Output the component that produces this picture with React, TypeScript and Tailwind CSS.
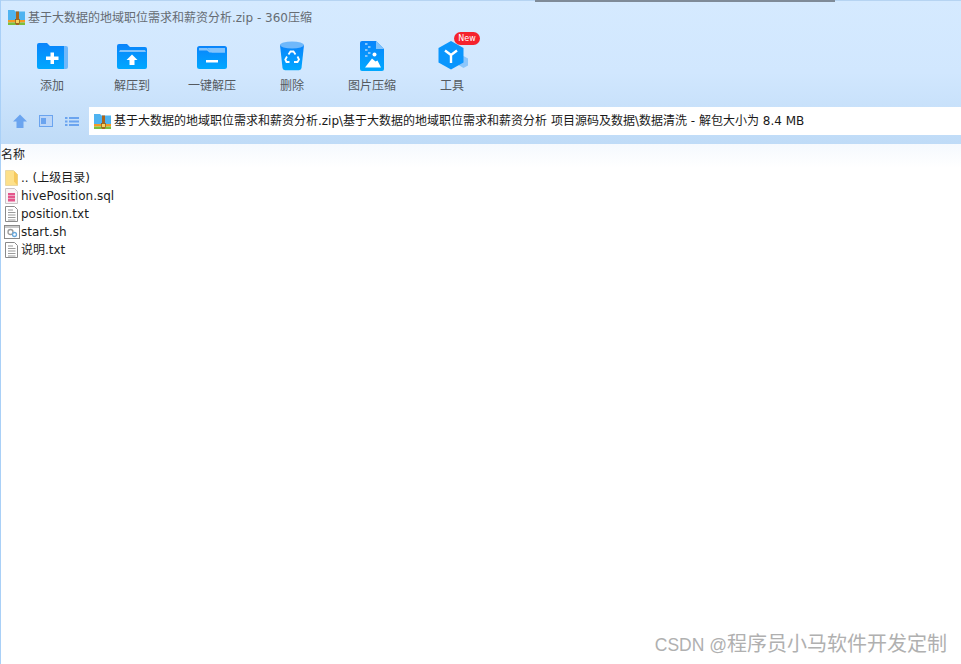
const FONT = "font-['DejaVu_Sans','Noto_Sans_CJK_SC',sans-serif]";

function ZipIcon() {
  return (
    <svg viewBox="0 0 17 15" width="17" height="15">
      <path d="M0 0h6l1.500 1.500H17V11H0z" fill="#4fb3f0" />
      <rect x="0" y="10" width="17" height="2.500" fill="#f59a23" />
      <rect x="0" y="12.500" width="17" height="2.500" fill="#7cbf3c" />
      <rect x="8" y="1.500" width="3" height="13.500" fill="#a8651f" />
      <rect x="7.500" y="9.500" width="4" height="4" fill="#f6d45f" stroke="#8a5317" strokeWidth="0.7" />
    </svg>
  );
}

function BlueGrad({ id }: { id: string }) {
  return (
    <defs>
      <linearGradient id={id} x1="0" y1="0" x2="0" y2="1">
        <stop offset="0" stopColor="#0a84fb" />
        <stop offset="1" stopColor="#00a8ff" />
      </linearGradient>
    </defs>
  );
}

const tools: { label: string; icon: React.ReactNode }[] = [
  {
    label: "添加",
    icon: (
      <svg viewBox="0 0 32 30" width="32" height="30">
        <BlueGrad id="g1" />
        <path d="M26 5h4a2 2 0 0 1 2 2v19a2 2 0 0 1-2 2h-4z" fill="#6fb8fb" />
        <path d="M1 4a2 2 0 0 1 2-2h8l3 3h14v23H3a2 2 0 0 1-2-2z" fill="url(#g1)" />
        <path d="M14.500 11.500h3.500v4h4.500v3.500h-4.500v4h-3.500v-4h-4.500v-3.500h4.500z" fill="#fff" />
      </svg>
    ),
  },
  {
    label: "解压到",
    icon: (
      <svg viewBox="0 0 32 30" width="32" height="30">
        <BlueGrad id="g2" />
        <path d="M1 5a2 2 0 0 1 2-2h8l3 3h15a2 2 0 0 1 2 2v18a2 2 0 0 1-2 2H3a2 2 0 0 1-2-2z" fill="url(#g2)" />
        <path d="M3 11l1-2h25l1 2z" fill="#82c3fc" />
        <path d="M16 13.500l5.500 5.500h-3v5h-5v-5h-3z" fill="#fff" />
      </svg>
    ),
  },
  {
    label: "一键解压",
    icon: (
      <svg viewBox="0 0 32 30" width="32" height="30">
        <BlueGrad id="g3" />
        <rect x="1" y="5" width="30" height="23" rx="2.500" fill="url(#g3)" />
        <path d="M3 7h8l3 2.500v2h-.5l-2.500-2H3zM14 7h15v4.500H14z" fill="#82c3fc" />
        <path d="M11 7l5 4.500h13V7z" fill="#82c3fc" />
        <rect x="10" y="19" width="12" height="2.500" fill="#fff" />
      </svg>
    ),
  },
  {
    label: "删除",
    icon: (
      <svg viewBox="0 0 26 30" width="26" height="30">
        <BlueGrad id="g4" />
        <path d="M1 4l2.500 23q.3 2 2.500 2.300h14q2.200-.3 2.500-2.300L25 4z" fill="url(#g4)" />
        <ellipse cx="13" cy="4" rx="12" ry="3.500" fill="#6fb8fb" />
        <g fill="none" stroke="#fff" strokeWidth="1.800">
          <path d="M9.500 13.500l2-3h3l2 3" />
          <path d="M18.500 15.500l1.500 3-1.500 2.500h-3.500" />
          <path d="M10.500 21H7.500l-1.200-2.500 1.700-3" />
        </g>
      </svg>
    ),
  },
  {
    label: "图片压缩",
    icon: (
      <svg viewBox="0 0 24 30" width="24" height="30">
        <BlueGrad id="g5" />
        <path d="M2 0h14l8 8v20a2 2 0 0 1-2 2H2a2 2 0 0 1-2-2V2a2 2 0 0 1 2-2z" fill="url(#g5)" />
        <path d="M16 0l8 8h-8z" fill="#82c3fc" />
        <path d="M5 26.500l7-9 3.500 3 2-1L21 26.500z" fill="#fff" />
        <circle cx="14.500" cy="13.500" r="2" fill="#fff" />
        <g fill="#82c3fc">
          <rect x="5" y="2" width="2.500" height="2" />
          <rect x="8" y="5" width="2.500" height="2" />
          <rect x="5" y="8" width="2.500" height="2" />
          <rect x="8" y="11" width="2.500" height="2" />
          <rect x="5" y="14" width="2.500" height="2" />
        </g>
      </svg>
    ),
  },
  {
    label: "工具",
    icon: (
      <svg viewBox="0 0 32 30" width="32" height="30">
        <path d="M27.500 15l4.500 2.500v7l-4.500 2.500-5-3v-6z" fill="#8cc6fb" />
        <path d="M15 0l12.500 7v14.500L15 28.500 2.500 21.500V7z" fill="#0a96fd" />
        <path d="M9 9.500l6 4.500 6-4.500M15 14v8" fill="none" stroke="#fff" strokeWidth="2.400" />
      </svg>
    ),
  },
];

function Doc() {
  return (
    <svg viewBox="0 0 13 16" width="13" height="16">
      <path d="M.5.5h9l3 3v12H.5z" fill="#fff" stroke="#8a8a8a" />
      <path d="M3 4h5M3 6.500h7.500M3 9h7.500M3 11.500h7.500M3 14h7.500" stroke="#9a9a9a" />
    </svg>
  );
}

const files: { name: string; icon: React.ReactNode }[] = [
  {
    name: ".. (上级目录)",
    icon: (
      <svg viewBox="0 0 13 16" width="13" height="16">
        <path d="M.5.500h8l4 4v11H.5z" fill="#fde08a" stroke="#e8d7a5" />
        <path d="M9 1v10.500l3.500 4v-11z" fill="#f6c95e" />
      </svg>
    ),
  },
  {
    name: "hivePosition.sql",
    icon: (
      <svg viewBox="0 0 13 16" width="13" height="16">
        <path d="M.5.500h9l3 3v12H.5z" fill="#f7f3f5" stroke="#c9c4c6" />
        <path d="M3 5h7v2.500H3zM3 8h7v2.500H3zM3 11h7v2.500H3z" fill="#e4568c" />
      </svg>
    ),
  },
  { name: "position.txt", icon: <Doc /> },
  {
    name: "start.sh",
    icon: (
      <svg viewBox="0 0 16 14" width="16" height="14">
        <rect x=".5" y=".5" width="15" height="13" fill="#fff" stroke="#8a8a8a" />
        <rect x="1" y="1" width="14" height="2" fill="#c9c9c9" />
        <circle cx="6.500" cy="7" r="2.500" fill="none" stroke="#9a9a9a" strokeWidth="1.300" />
        <circle cx="10.500" cy="9.500" r="2" fill="none" stroke="#6aa9dc" strokeWidth="1.300" />
      </svg>
    ),
  },
  { name: "说明.txt", icon: <Doc /> },
];

export default function App() {
  return (
    <div className={`relative flex h-[664px] w-[961px] flex-col overflow-hidden border-l border-[#a9d0f7] bg-white ${FONT}`}>
      <div className="absolute left-[534px] top-0 h-[2px] w-[300px] bg-[#7f8b98] blur-[0.5px]" />

      <header className="flex h-[144px] shrink-0 flex-col border-t border-[#b6d4f2] bg-[linear-gradient(#d5eaff,#d1e7fe_50%,#bfdbf7)]">
        <div className="flex h-[32px] items-center gap-[3px] pl-[7px] pt-[1px]">
          <ZipIcon />
          <span className="text-[12px] leading-none text-[#666c73]">基于大数据的地域职位需求和薪资分析.zip - 360压缩</span>
        </div>

        <div className="flex h-[74px] pl-[11px] pt-[8px]">
          {tools.map((t) => (
            <div key={t.label} className="relative flex w-[80px] flex-col items-center">
              <div className="flex h-[30px] items-center justify-center">{t.icon}</div>
              {t.label === "工具" && (
                <span className="absolute left-[42px] top-[-9px] flex h-[13px] w-[26px] items-center justify-center rounded-full bg-[#f5222d] text-[8px] leading-none text-white">New</span>
              )}
              <span className="mt-[6px] text-[12px] leading-[18px] text-[#555a60]">{t.label}</span>
            </div>
          ))}
        </div>

        <div className="flex h-[28px] items-center">
          <div className="flex w-[88px] items-center pl-[12px]">
            <svg viewBox="0 0 14 14" width="14" height="14">
              <path d="M7 .5L14 7.500h-3.500V14h-7V7.500H0z" fill="#6ba4ef" />
            </svg>
            <svg viewBox="0 0 14 12" width="14" height="12" className="ml-[12px]">
              <rect x=".5" y=".5" width="13" height="11" fill="#bcd6f8" stroke="#6ba4ef" />
              <rect x="2" y="3" width="5" height="6" fill="#6ba4ef" />
            </svg>
            <svg viewBox="0 0 14 11" width="14" height="11" className="ml-[12px]">
              <path d="M0 1h2.500v2H0zM4 1h10v2H4zM0 4.500h2.500v2H0zM4 4.500h10v2H4zM0 8h2.500v2H0zM4 8h10v2H4z" fill="#6ba4ef" />
            </svg>
          </div>
          <div className="flex h-[28px] flex-1 items-center gap-[3px] bg-white pl-[5px]">
            <ZipIcon />
            <span className="whitespace-nowrap text-[12px] leading-none text-[#1a1a1a]">
              基于大数据的地域职位需求和薪资分析.zip\基于大数据的地域职位需求和薪资分析 项目源码及数据\数据清洗 - 解包大小为 8.4 MB
            </span>
          </div>
        </div>
      </header>

      <main className="flex flex-1 flex-col bg-[linear-gradient(#f5f9fe,#ffffff_24px)]">
        <div className="flex h-[22px] items-center text-[12px] leading-none text-[#222]">名称</div>
        <ul className="pt-[3px]">
          {files.map((f) => (
            <li key={f.name} className="flex h-[18px] items-center">
              <span className="flex w-[20px] justify-center pl-[1px]">{f.icon}</span>
              <span className="text-[12px] leading-none text-[#1c1c1c]">{f.name}</span>
            </li>
          ))}
        </ul>
      </main>

      <div className="absolute bottom-[7px] right-[14px] flex items-baseline leading-[24px] text-[#b0b0b0]">
        <span className="font-['Liberation_Sans',sans-serif] text-[17.500px]">CSDN @</span>
        <span className="font-['Noto_Sans_CJK_SC',sans-serif] text-[20px]">程序员小马软件开发定制</span>
      </div>
    </div>
  );
}
